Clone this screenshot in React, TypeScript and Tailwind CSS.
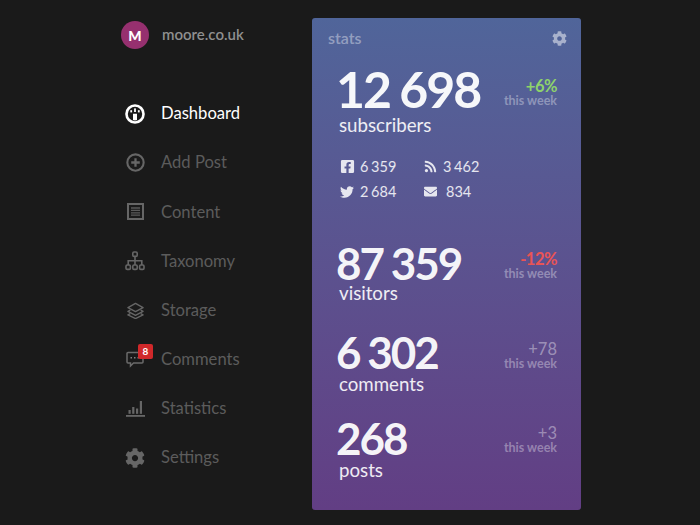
import type { ReactNode } from 'react';
import { FaCog, FaFacebookSquare, FaTwitter, FaRss, FaEnvelope } from 'react-icons/fa';

const Gauge = () => (
  <svg viewBox="0 0 20 20" className="w-[20px] h-[20px]">
    <circle cx="10" cy="10" r="9.8" fill="#fff" />
    <circle cx="10" cy="10" r="7.2" fill="#1a1a1a" />
    <path d="M8 9.800h4v6.300a7 7 0 0 1-4 0z" fill="#fff" />
    <rect x="9.100" y="4.400" width="1.800" height="3.600" fill="#fff" />
    <rect x="5.300" y="6.200" width="1.800" height="2.200" fill="#fff" />
    <rect x="12.900" y="6.200" width="1.800" height="2.200" fill="#fff" />
  </svg>
);

const AddPost = () => (
  <svg viewBox="0 0 20 20" className="w-[19px] h-[19px]" fill="none" stroke="#666">
    <circle cx="10" cy="10" r="8.6" strokeWidth="2.200" />
    <path d="M10 5.500v9M5.500 10h9" strokeWidth="2.400" />
  </svg>
);

const Content = () => (
  <svg viewBox="0 0 17 17" className="w-[17px] h-[17px]" fill="none" stroke="#666">
    <rect x="1" y="1" width="15" height="15" strokeWidth="2" />
    <path d="M4 5h9M4 7.400h9M4 9.800h9M4 12.200h9" strokeWidth="1.300" stroke="#5a5a5a" />
  </svg>
);

const Taxonomy = () => (
  <svg viewBox="0 0 20 20" className="w-[20px] h-[20px]" fill="none" stroke="#666" strokeWidth="1.600">
    <rect x="7.800" y="1" width="4.400" height="4.400" rx="1.200" />
    <rect x="1" y="14" width="4.400" height="4.400" rx="1.200" />
    <rect x="7.800" y="14" width="4.400" height="4.400" rx="1.200" />
    <rect x="14.600" y="14" width="4.400" height="4.400" rx="1.200" />
    <path d="M10 5.400V14M3.200 14V9.700h13.600V14" />
  </svg>
);

const Storage = () => (
  <svg viewBox="0 0 20 18" className="w-[19px] h-[17px]" fill="none" stroke="#666" strokeWidth="1.500" strokeLinejoin="round">
    <path d="M10 1.500 18 6l-8 4.200L2 6z" />
    <path d="M4.500 8.600 2 10l8 4.200 8-4.200-2.500-1.400" />
    <path d="M4.500 12.400 2 13.600l8 3.900 8-3.900-2.500-1.200" />
  </svg>
);

const Comments = () => (
  <svg viewBox="0 0 18 17" className="w-[18px] h-[17px]" fill="none">
    <path d="M2 1.500h14a1 1 0 0 1 1 1v8.500a1 1 0 0 1-1 1H7.500L4.500 15v-3H2a1 1 0 0 1-1-1V2.500a1 1 0 0 1 1-1z" stroke="#6b6b6b" strokeWidth="1.500" />
    <path d="M4.500 6.800h1.500M8 6.800h1.500M11.500 6.800h1.500" stroke="#808080" strokeWidth="1.600" />
  </svg>
);

const Statistics = () => (
  <svg viewBox="0 0 19 17" className="w-[19px] h-[17px]" fill="#666">
    <rect x="0" y="15" width="19" height="1.800" />
    <rect x="2.500" y="10" width="2.200" height="3.800" />
    <rect x="6.200" y="7" width="2.200" height="6.800" />
    <rect x="10" y="8.500" width="2.200" height="5.300" />
    <rect x="13.800" y="1" width="2.200" height="12.800" />
  </svg>
);

const navItems: { label: string; icon: ReactNode; badge?: string }[] = [
  { label: 'Add Post', icon: <AddPost /> },
  { label: 'Content', icon: <Content /> },
  { label: 'Taxonomy', icon: <Taxonomy /> },
  { label: 'Storage', icon: <Storage /> },
  { label: 'Comments', icon: <Comments />, badge: '8' },
  { label: 'Statistics', icon: <Statistics /> },
  { label: 'Settings', icon: <FaCog className="w-[20px] h-[20px] text-[#666]" /> },
];

function NavRow({ label, icon, badge, active }: { label: string; icon: ReactNode; badge?: string; active?: boolean }) {
  return (
    <div className="flex items-center h-[49.2px]">
      <div className="relative w-[40px] flex justify-center pr-[12px] shrink-0">
        {icon}
        {badge && (
          <span className="absolute left-[17px] top-[-7px] w-[15px] h-[15px] rounded-[2px] bg-[#d0282a] text-white text-[10px] font-bold leading-[15px] text-center">
            {badge}
          </span>
        )}
      </div>
      <span className={active ? 'text-[16.6px] text-white' : 'text-[16.6px] text-[#5c5c5c]'}>{label}</span>
    </div>
  );
}

function Delta({ value, color, bold, className }: { value: string; color: string; bold?: boolean; className: string }) {
  return (
    <div className={`text-right ${className}`}>
      <div className={`text-[16.5px] leading-[15px] ${color} ${bold ? 'font-bold tracking-[-0.5px]' : ''}`}>{value}</div>
      <div className="text-[12.5px] leading-[14px] font-bold text-white/35">this week</div>
    </div>
  );
}

function Stat({ value, label, delta, className, numberClass, labelClass }: { value: string; label: string; delta: ReactNode; className: string; numberClass: string; labelClass: string }) {
  return (
    <div className={`flex justify-between items-start pr-[24px] ${className}`}>
      <div>
        <div className={`leading-[44px] font-bold text-white/95 tracking-[-2px] [word-spacing:-1px] pl-[24px] ${numberClass}`}>{value}</div>
        <div className={`text-[18.7px] leading-[22px] text-white/90 pl-[27px] ${labelClass}`}>{label}</div>
      </div>
      {delta}
    </div>
  );
}

function Social({ icon, value, textOffset }: { icon: ReactNode; value: string; textOffset: string }) {
  return (
    <div className="flex items-center h-[21px]">
      <span className={`flex shrink-0 ${textOffset}`}>{icon}</span>
      <span className="text-[14.5px] text-white/85 [word-spacing:-1px]">{value}</span>
    </div>
  );
}

export default function App() {
  return (
    <div className="w-[700px] h-[525px] overflow-hidden bg-[#1a1a1a] flex font-['Lato',sans-serif] pl-[121px]">
      <aside className="w-[191px] shrink-0 pt-[21px]">
        <div className="flex items-center h-[28px]">
          <div className="w-[28px] h-[28px] rounded-full bg-[#96306f] text-white text-[14px] font-black flex items-center justify-center">M</div>
          <span className="ml-[13px] text-[15px] font-semibold text-[#8f8f8f] mt-[-2px]">moore.co.uk</span>
        </div>
        <nav className="mt-[40px]">
          <NavRow label="Dashboard" icon={<Gauge />} active />
          {navItems.map((item) => (
            <NavRow key={item.label} label={item.label} icon={item.icon} badge={item.badge} />
          ))}
        </nav>
      </aside>

      <main className="mt-[18px] w-[269px] h-[492px] rounded-[3px] bg-gradient-to-b from-[#50659a] to-[#623e84] flex flex-col">
        <div className="flex items-center justify-between pl-[16px] pr-[14px] pt-[10px] h-[30px]">
          <span className="text-[16px] font-semibold text-white/40">stats</span>
          <FaCog className="w-[15px] h-[15px] text-white/50" />
        </div>

        <Stat
          value="12 698"
          label="subscribers"
          className="mt-[19px]"
          numberClass="text-[50px]"
          labelClass="mt-[3px]"
          delta={<Delta value="+6%" color="text-[#8ed36b]" bold className="pt-[12px]" />}
        />

        <div className="grid grid-cols-[84px_1fr] pl-[28px] mt-[20px] gap-y-[4px]">
          <Social icon={<FaFacebookSquare className="w-[15px] h-[15px] text-white/85" />} value="6 359" textOffset="w-[20px]" />
          <Social icon={<FaRss className="w-[13px] h-[13px] text-white/85" />} value="3 462" textOffset="w-[19px]" />
          <Social icon={<FaTwitter className="w-[14px] h-[14px] text-white/85" />} value="2 684" textOffset="w-[20px]" />
          <Social icon={<FaEnvelope className="w-[13px] h-[13px] text-white/85" />} value="834" textOffset="w-[22px]" />
        </div>

        <Stat
          value="87 359"
          label="visitors"
          className="mt-[39px]"
          numberClass="text-[44px]"
          labelClass="mt-[-3px]"
          delta={<Delta value="-12%" color="text-[#ea5455]" bold className="pt-[11px]" />}
        />
        <Stat
          value="6 302"
          label="comments"
          className="mt-[26px]"
          numberClass="text-[44px]"
          labelClass="mt-[-1px]"
          delta={<Delta value="+78" color="text-white/40" className="pt-[12px]" />}
        />
        <Stat
          value="268"
          label="posts"
          className="mt-[21px]"
          numberClass="text-[44px]"
          labelClass="mt-[-1px]"
          delta={<Delta value="+3" color="text-white/40" className="pt-[10px]" />}
        />
      </main>
    </div>
  );
}
